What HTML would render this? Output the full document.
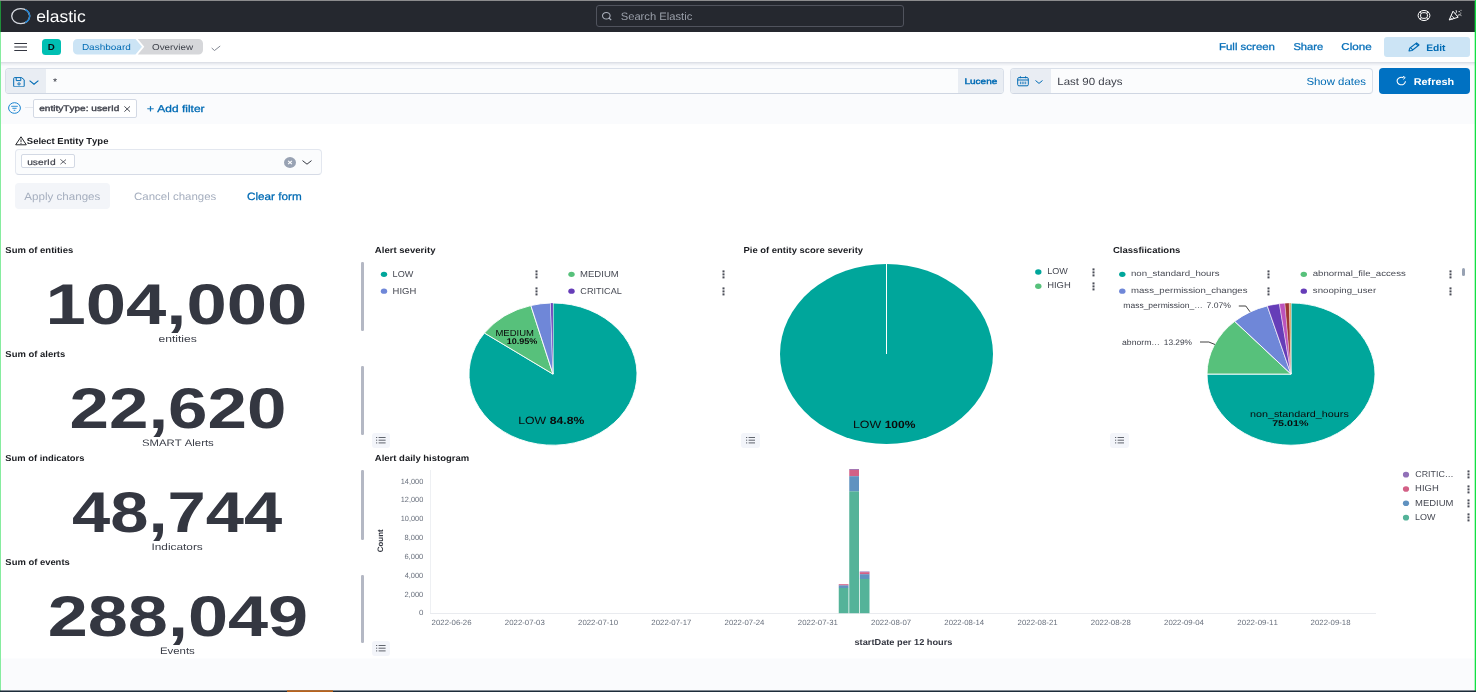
<!DOCTYPE html>
<html><head><meta charset="utf-8"><title>Dashboard - Elastic</title>
<style>
html,body{margin:0;padding:0;}
body{width:1476px;height:692px;overflow:hidden;background:#fafbfd;position:relative;font-family:"Liberation Sans",sans-serif;}
.t{position:absolute;white-space:nowrap;line-height:1;transform-origin:0 0;font-kerning:none;font-variant-ligatures:none;font-family:"Liberation Sans",sans-serif;}
</style></head><body><div id="root" style="position:absolute;left:0;top:0;width:1476px;height:692px;will-change:transform;">
<div style="position:absolute;left:0px;top:32px;width:1476px;height:30px;background:#ffffff;"></div>
<div style="position:absolute;left:0px;top:62px;width:1476px;height:1px;background:#dde0e7;"></div>
<div style="position:absolute;left:0px;top:63px;width:1476px;height:1px;background:#e8eaef;"></div>
<div style="position:absolute;left:0px;top:64px;width:1476px;height:1px;background:#f0f2f6;"></div>
<div style="position:absolute;left:0px;top:65px;width:1476px;height:1px;background:#f6f7fa;"></div>
<div style="position:absolute;left:0px;top:124px;width:1476px;height:534px;background:#ffffff;"></div>
<div style="position:absolute;left:0px;top:658px;width:1476px;height:1px;background:#fcfdfe;"></div>
<div style="position:absolute;left:0px;top:0px;width:1476px;height:32px;background:#25282f;"></div>
<div style="position:absolute;left:0px;top:0px;width:1476px;height:1px;background:#8c8c8e;"></div>
<svg style="position:absolute;left:10px;top:7px;" width="22" height="18" viewBox="0 0 22 18" preserveAspectRatio="none"><ellipse cx="10.7" cy="9.1" rx="9" ry="7.5" fill="none" stroke="#d6d9e0" stroke-width="1.3"/><path d="M15.2 2.6 A9 7.5 0 0 1 15.2 15.6" fill="none" stroke="#1b83d6" stroke-width="1.4"/></svg>
<div style="position:absolute;left:596px;top:5px;width:306px;height:20px;border:1px solid #50535d;border-radius:3px;"></div>
<svg style="position:absolute;left:601px;top:11px;" width="12" height="10" viewBox="0 0 12 10" preserveAspectRatio="none"><ellipse cx="5.3" cy="4.7" rx="3.8" ry="3.3" fill="none" stroke="#aab0bb" stroke-width="1.05"/><path d="M7.9 7.0 L10.2 9.0" stroke="#aab0bb" stroke-width="1.05" fill="none"/></svg>
<svg style="position:absolute;left:1416.6px;top:9.2px;" width="14" height="13" viewBox="0 0 14 13" preserveAspectRatio="none"><ellipse cx="7" cy="6.5" rx="5.9" ry="5.05" fill="none" stroke="#fff" stroke-width="1.0"/><rect x="3.6" y="3.7" width="6.8" height="5.6" rx="2.2" ry="2.0" fill="none" stroke="#fff" stroke-width="1.0"/><path d="M2.7 2.9 L4.3 4.3 M11.3 2.9 L9.7 4.3 M2.7 10.1 L4.3 8.7 M11.3 10.1 L9.7 8.7" stroke="#fff" stroke-width="0.9"/></svg>
<svg style="position:absolute;left:1447.5px;top:9.0px;" width="15" height="12" viewBox="0 0 15 12" preserveAspectRatio="none"><path d="M1.2 11 L5 2.2 L10.2 8.2 Z" fill="none" stroke="#fff" stroke-width="1" stroke-linejoin="round"/><path d="M3.2 6.5 L6.8 9.6 M2.2 8.8 L4.6 10.4" stroke="#fff" stroke-width="0.8"/><path d="M7.5 4.6 C8.6 3.4 8.8 2.4 8 1.2 M9.6 6.6 C11 5.4 12.4 5.6 13.4 6.6" fill="none" stroke="#fff" stroke-width="0.9"/><circle cx="11.2" cy="2.6" r="0.7" fill="#fff"/><circle cx="13" cy="1.2" r="0.5" fill="#fff"/><circle cx="12.8" cy="4" r="0.5" fill="#fff"/></svg>
<svg style="position:absolute;left:14px;top:42px;" width="14" height="10" viewBox="0 0 14 10" preserveAspectRatio="none"><path d="M0.3 1.5 H13 M0.3 4.95 H13 M0.3 8.4 H13" stroke="#343741" stroke-width="1.05"/></svg>
<div style="position:absolute;left:42px;top:39.2px;width:18.7px;height:15.6px;background:#00bfb3;border-radius:3.5px;"></div>
<svg style="position:absolute;left:73px;top:39.2px;" width="131" height="15.6" viewBox="0 0 131 15.6" preserveAspectRatio="none"><path d="M4.5 0 H62.5 L69 7.8 L62.5 15.6 H4.5 A4.5 4.5 0 0 1 0 11.1 V4.5 A4.5 4.5 0 0 1 4.5 0 Z" fill="#cce4f5"/><path d="M64.8 0 H125.5 A4.5 4.5 0 0 1 130 4.5 V11.1 A4.5 4.5 0 0 1 125.5 15.6 H64.8 L71.3 7.8 Z" fill="#d6d7da"/></svg>
<svg style="position:absolute;left:210.5px;top:44.5px;" width="10" height="6.5" viewBox="0 0 10 6.5" preserveAspectRatio="none"><path d="M0.7 3.0 L3.5 5.5 L9.2 1.0" fill="none" stroke="#7b818c" stroke-width="0.95"/></svg>
<div style="position:absolute;left:1384px;top:37px;width:85.7px;height:20.2px;background:#cce4f5;border-radius:3px;"></div>
<svg style="position:absolute;left:1407.5px;top:42px;" width="12" height="10" viewBox="0 0 12 10" preserveAspectRatio="none"><path d="M1 8.9 L1.7 6.3 L8.6 0.9 L11 3 L4 8.5 Z M2.6 5.9 L4.8 7.8 M7.6 1.7 L9.9 3.7" fill="none" stroke="#006bb4" stroke-width="1.1" stroke-linejoin="round"/></svg>
<div style="position:absolute;left:5px;top:68px;width:997px;height:25px;background:#fbfcfd;border:1px solid #d9dfe9;border-bottom-color:#cfd6e2;border-radius:4px;box-sizing:border-box;width:998.5px;height:26px;overflow:hidden;"><div style="position:absolute;left:0;top:0;width:40px;height:26px;background:#e9edf3;"></div><div style="position:absolute;left:952px;top:0;width:46px;height:26px;background:#e9edf3;"></div></div>
<svg style="position:absolute;left:12.6px;top:76.8px;" width="12" height="10.5" viewBox="0 0 12 10.5" preserveAspectRatio="none"><path d="M1.6 0.6 H8.6 L11.2 2.8 V9 A0.9 0.9 0 0 1 10.3 9.9 H1.6 A0.9 0.9 0 0 1 0.7 9 V1.5 A0.9 0.9 0 0 1 1.6 0.6 Z" fill="none" stroke="#006bb4" stroke-width="1"/><path d="M3.2 0.8 V3.6 H7.8 V0.8" fill="none" stroke="#006bb4" stroke-width="1"/><ellipse cx="6" cy="6.9" rx="1.2" ry="1.1" fill="none" stroke="#006bb4" stroke-width="0.9"/></svg>
<svg style="position:absolute;left:29px;top:79.6px;" width="10" height="5" viewBox="0 0 10 5" preserveAspectRatio="none"><path d="M0.6 0.6 L5 4.2 L9.4 0.6" fill="none" stroke="#006bb4" stroke-width="1.1"/></svg>
<div style="position:absolute;left:1010px;top:68px;width:362.5px;height:26px;background:#fbfcfd;border:1px solid #d9dfe9;border-bottom-color:#cfd6e2;border-radius:4px;box-sizing:border-box;overflow:hidden;"><div style="position:absolute;left:0;top:0;width:39.5px;height:26px;background:#e9edf3;"></div></div>
<svg style="position:absolute;left:1017px;top:76px;" width="12" height="10.5" viewBox="0 0 12 10.5" preserveAspectRatio="none"><rect x="0.7" y="1.6" width="10.6" height="8.2" rx="1.2" fill="none" stroke="#006bb4" stroke-width="1"/><path d="M0.7 4 H11.3 M3.4 0.3 V2.2 M8.6 0.3 V2.2" stroke="#006bb4" stroke-width="1" fill="none"/><path d="M3.4 5.6 V8.2 M5.2 5.6 V8.2 M6.9 5.6 V8.2 M8.7 5.6 V8.2" stroke="#006bb4" stroke-width="0.8"/></svg>
<svg style="position:absolute;left:1034.6px;top:79.8px;" width="8" height="4" viewBox="0 0 8 4" preserveAspectRatio="none"><path d="M0.5 0.5 L4 3.4 L7.5 0.5" fill="none" stroke="#006bb4" stroke-width="1"/></svg>
<div style="position:absolute;left:1379px;top:68px;width:90.7px;height:26.2px;background:#0071c2;border-radius:4px;"></div>
<svg style="position:absolute;left:1396px;top:76.2px;" width="11" height="10" viewBox="0 0 10 9.5" preserveAspectRatio="none"><path d="M8.6 5 A3.8 3.6 0 1 1 6.8 1.7" fill="none" stroke="#fff" stroke-width="1"/><path d="M6.2 0.2 L8.4 1.5 L6.6 3.2" fill="none" stroke="#fff" stroke-width="0.9"/></svg>
<svg style="position:absolute;left:8px;top:101.5px;" width="13" height="12" viewBox="0 0 13 12" preserveAspectRatio="none"><ellipse cx="6.5" cy="6" rx="5.9" ry="5.3" fill="none" stroke="#1a84d0" stroke-width="1"/><path d="M3.2 4.3 H9.8 M4.4 6.3 H8.6 M5.7 8.3 H7.3" stroke="#1a84d0" stroke-width="0.9"/></svg>
<div style="position:absolute;left:25px;top:106.8px;width:8px;height:0.9px;background:#e4e7ee;"></div>
<div style="position:absolute;left:33.2px;top:99.2px;width:103.6px;height:18.9px;background:#fff;border:1px solid #d3d9e4;border-radius:2px;box-sizing:border-box;"></div>
<svg style="position:absolute;left:123.6px;top:105.6px;" width="6.4" height="6" viewBox="0 0 6.4 6" preserveAspectRatio="none"><path d="M0.4 0.4 L6 5.6 M6 0.4 L0.4 5.6" stroke="#40434d" stroke-width="0.95"/></svg>
<svg style="position:absolute;left:14.6px;top:136.4px;" width="12" height="9.6" viewBox="0 0 12 9.6" preserveAspectRatio="none"><path d="M6 0.8 L11.3 8.8 H0.7 Z" fill="none" stroke="#1a1c21" stroke-width="0.95" stroke-linejoin="round"/><path d="M6 3.4 V6.2 M6 7.0 V7.9" stroke="#1a1c21" stroke-width="0.9"/></svg>
<div style="position:absolute;left:14.5px;top:149px;width:307.3px;height:26px;background:#fbfcfd;border:1px solid #e3e7ef;border-bottom-color:#d6dbe6;border-radius:4px;box-sizing:border-box;"></div>
<div style="position:absolute;left:21px;top:154.4px;width:53.5px;height:14px;background:#fff;border:1px solid #d3d9e4;border-radius:2px;box-sizing:border-box;"></div>
<svg style="position:absolute;left:59.7px;top:159.2px;" width="6.6" height="5.6" viewBox="0 0 6.6 5.6" preserveAspectRatio="none"><path d="M0.4 0.4 L6.2 5.2 M6.2 0.4 L0.4 5.2" stroke="#40434d" stroke-width="0.8"/></svg>
<svg style="position:absolute;left:284px;top:156.7px;" width="12" height="11" viewBox="0 0 12 11" preserveAspectRatio="none"><ellipse cx="6" cy="5.5" rx="6" ry="5.4" fill="#98a2b3"/><path d="M4.1 3.8 L7.9 7.2 M7.9 3.8 L4.1 7.2" stroke="#fff" stroke-width="1.1"/></svg>
<svg style="position:absolute;left:302px;top:159.8px;" width="10" height="5" viewBox="0 0 10 5" preserveAspectRatio="none"><path d="M0.5 0.6 L5 4.2 L9.5 0.6" fill="none" stroke="#343741" stroke-width="1"/></svg>
<div style="position:absolute;left:14.5px;top:183px;width:95px;height:25.7px;background:#f3f5f9;border-radius:4px;"></div>
<div style="position:absolute;left:361.3px;top:262px;width:2.4px;height:69.0px;background:#b4b8c4;border-radius:1.2px;"></div>
<div style="position:absolute;left:361.3px;top:366px;width:2.4px;height:69.2px;background:#b4b8c4;border-radius:1.2px;"></div>
<div style="position:absolute;left:361.3px;top:470.2px;width:2.4px;height:69.6px;background:#b4b8c4;border-radius:1.2px;"></div>
<div style="position:absolute;left:361.3px;top:574.5px;width:2.4px;height:68.7px;background:#b4b8c4;border-radius:1.2px;"></div>
<svg style="position:absolute;left:379px;top:270px;" width="10" height="9" viewBox="0 0 10 9" preserveAspectRatio="none"><ellipse cx="5.00" cy="4.35" rx="3.2" ry="2.7" fill="#00a69b"/></svg>
<svg style="position:absolute;left:535.0px;top:270.0px;" width="3" height="9" viewBox="0 0 3 9" preserveAspectRatio="none"><rect x="0.5" y="0.4" width="2.0" height="2.0" fill="#4a4d57"/><rect x="0.5" y="3.4" width="2.0" height="2.0" fill="#4a4d57"/><rect x="0.5" y="6.4" width="2.0" height="2.0" fill="#4a4d57"/></svg>
<svg style="position:absolute;left:379px;top:287px;" width="10" height="9" viewBox="0 0 10 9" preserveAspectRatio="none"><ellipse cx="5.00" cy="4.15" rx="3.2" ry="2.7" fill="#6f87d8"/></svg>
<svg style="position:absolute;left:535.0px;top:286.8px;" width="3" height="9" viewBox="0 0 3 9" preserveAspectRatio="none"><rect x="0.5" y="0.4" width="2.0" height="2.0" fill="#4a4d57"/><rect x="0.5" y="3.4" width="2.0" height="2.0" fill="#4a4d57"/><rect x="0.5" y="6.4" width="2.0" height="2.0" fill="#4a4d57"/></svg>
<svg style="position:absolute;left:567px;top:270px;" width="10" height="9" viewBox="0 0 10 9" preserveAspectRatio="none"><ellipse cx="4.50" cy="4.35" rx="3.2" ry="2.7" fill="#57c17b"/></svg>
<svg style="position:absolute;left:722.3px;top:270.0px;" width="3" height="9" viewBox="0 0 3 9" preserveAspectRatio="none"><rect x="0.5" y="0.4" width="2.0" height="2.0" fill="#4a4d57"/><rect x="0.5" y="3.4" width="2.0" height="2.0" fill="#4a4d57"/><rect x="0.5" y="6.4" width="2.0" height="2.0" fill="#4a4d57"/></svg>
<svg style="position:absolute;left:567px;top:287px;" width="10" height="9" viewBox="0 0 10 9" preserveAspectRatio="none"><ellipse cx="4.50" cy="4.15" rx="3.2" ry="2.7" fill="#663db8"/></svg>
<svg style="position:absolute;left:722.3px;top:286.8px;" width="3" height="9" viewBox="0 0 3 9" preserveAspectRatio="none"><rect x="0.5" y="0.4" width="2.0" height="2.0" fill="#4a4d57"/><rect x="0.5" y="3.4" width="2.0" height="2.0" fill="#4a4d57"/><rect x="0.5" y="6.4" width="2.0" height="2.0" fill="#4a4d57"/></svg>
<svg style="position:absolute;left:467.0px;top:300.65px;" width="172" height="146.2" viewBox="0 0 172 146.2" preserveAspectRatio="none"><path d="M86 73.1 L86.00 2.00 A84 71.1 0 1 1 17.43 32.03 Z" fill="#00a69b" stroke="#fff" stroke-width="0.9" stroke-linejoin="round"/><path d="M86 73.1 L17.43 32.03 A84 71.1 0 0 1 63.83 4.52 Z" fill="#57c17b" stroke="#fff" stroke-width="0.9" stroke-linejoin="round"/><path d="M86 73.1 L63.83 4.52 A84 71.1 0 0 1 83.63 2.03 Z" fill="#6f87d8" stroke="#fff" stroke-width="0.9" stroke-linejoin="round"/><path d="M86 73.1 L83.63 2.03 A84 71.1 0 0 1 86.00 2.00 Z" fill="#663db8" stroke="#fff" stroke-width="0.25" stroke-linejoin="round"/></svg>
<div style="position:absolute;left:371.5px;top:432.8px;width:18.5px;height:15px;background:#f3f5fa;border-radius:3px;"></div>
<svg style="position:absolute;left:376.0px;top:437.2px;" width="9.6" height="6.4" viewBox="0 0 9.6 6.4" preserveAspectRatio="none"><path d="M0 0.5 H1.2 M0 3.2 H1.2 M0 5.9 H1.2" stroke="#454953" stroke-width="0.85"/><path d="M2.6 0.5 H9.6 M2.6 3.2 H9.6 M2.6 5.9 H9.6" stroke="#454953" stroke-width="0.85"/></svg>
<svg style="position:absolute;left:778.0px;top:262.25px;" width="217.0" height="184" viewBox="0 0 217.0 184" preserveAspectRatio="none"><ellipse cx="108.5" cy="92" rx="106.5" ry="90" fill="#00a69b"/><path d="M108.5 92 L108.5 2" stroke="#fff" stroke-width="1.0"/></svg>
<svg style="position:absolute;left:1034px;top:268px;" width="10" height="9" viewBox="0 0 10 9" preserveAspectRatio="none"><ellipse cx="4.30" cy="3.95" rx="3.2" ry="2.7" fill="#00a69b"/></svg>
<svg style="position:absolute;left:1091.5px;top:267.6px;" width="3" height="9" viewBox="0 0 3 9" preserveAspectRatio="none"><rect x="0.5" y="0.4" width="2.0" height="2.0" fill="#4a4d57"/><rect x="0.5" y="3.4" width="2.0" height="2.0" fill="#4a4d57"/><rect x="0.5" y="6.4" width="2.0" height="2.0" fill="#4a4d57"/></svg>
<svg style="position:absolute;left:1034px;top:282px;" width="10" height="9" viewBox="0 0 10 9" preserveAspectRatio="none"><ellipse cx="4.30" cy="4.25" rx="3.2" ry="2.7" fill="#57c17b"/></svg>
<svg style="position:absolute;left:1091.5px;top:281.9px;" width="3" height="9" viewBox="0 0 3 9" preserveAspectRatio="none"><rect x="0.5" y="0.4" width="2.0" height="2.0" fill="#4a4d57"/><rect x="0.5" y="3.4" width="2.0" height="2.0" fill="#4a4d57"/><rect x="0.5" y="6.4" width="2.0" height="2.0" fill="#4a4d57"/></svg>
<div style="position:absolute;left:741px;top:432.8px;width:18.5px;height:15px;background:#f3f5fa;border-radius:3px;"></div>
<svg style="position:absolute;left:745.5px;top:437.2px;" width="9.6" height="6.4" viewBox="0 0 9.6 6.4" preserveAspectRatio="none"><path d="M0 0.5 H1.2 M0 3.2 H1.2 M0 5.9 H1.2" stroke="#454953" stroke-width="0.85"/><path d="M2.6 0.5 H9.6 M2.6 3.2 H9.6 M2.6 5.9 H9.6" stroke="#454953" stroke-width="0.85"/></svg>
<svg style="position:absolute;left:1118px;top:270px;" width="10" height="9" viewBox="0 0 10 9" preserveAspectRatio="none"><ellipse cx="4.30" cy="4.35" rx="3.2" ry="2.7" fill="#00a69b"/></svg>
<svg style="position:absolute;left:1267.0px;top:270.0px;" width="3" height="9" viewBox="0 0 3 9" preserveAspectRatio="none"><rect x="0.5" y="0.4" width="2.0" height="2.0" fill="#4a4d57"/><rect x="0.5" y="3.4" width="2.0" height="2.0" fill="#4a4d57"/><rect x="0.5" y="6.4" width="2.0" height="2.0" fill="#4a4d57"/></svg>
<svg style="position:absolute;left:1118px;top:287px;" width="10" height="9" viewBox="0 0 10 9" preserveAspectRatio="none"><ellipse cx="4.30" cy="4.15" rx="3.2" ry="2.7" fill="#6f87d8"/></svg>
<svg style="position:absolute;left:1267.0px;top:286.8px;" width="3" height="9" viewBox="0 0 3 9" preserveAspectRatio="none"><rect x="0.5" y="0.4" width="2.0" height="2.0" fill="#4a4d57"/><rect x="0.5" y="3.4" width="2.0" height="2.0" fill="#4a4d57"/><rect x="0.5" y="6.4" width="2.0" height="2.0" fill="#4a4d57"/></svg>
<svg style="position:absolute;left:1299px;top:270px;" width="10" height="9" viewBox="0 0 10 9" preserveAspectRatio="none"><ellipse cx="4.80" cy="4.35" rx="3.2" ry="2.7" fill="#57c17b"/></svg>
<svg style="position:absolute;left:1448.5px;top:270.0px;" width="3" height="9" viewBox="0 0 3 9" preserveAspectRatio="none"><rect x="0.5" y="0.4" width="2.0" height="2.0" fill="#4a4d57"/><rect x="0.5" y="3.4" width="2.0" height="2.0" fill="#4a4d57"/><rect x="0.5" y="6.4" width="2.0" height="2.0" fill="#4a4d57"/></svg>
<svg style="position:absolute;left:1299px;top:287px;" width="10" height="9" viewBox="0 0 10 9" preserveAspectRatio="none"><ellipse cx="4.80" cy="4.15" rx="3.2" ry="2.7" fill="#663db8"/></svg>
<svg style="position:absolute;left:1448.5px;top:286.8px;" width="3" height="9" viewBox="0 0 3 9" preserveAspectRatio="none"><rect x="0.5" y="0.4" width="2.0" height="2.0" fill="#4a4d57"/><rect x="0.5" y="3.4" width="2.0" height="2.0" fill="#4a4d57"/><rect x="0.5" y="6.4" width="2.0" height="2.0" fill="#4a4d57"/></svg>
<div style="position:absolute;left:1462.2px;top:267.5px;width:3px;height:8.8px;background:#98a2b3;border-radius:1.5px;"></div>
<svg style="position:absolute;left:1205.4px;top:300.65px;" width="172" height="146.2" viewBox="0 0 172 146.2" preserveAspectRatio="none"><path d="M86 73.1 L86.00 2.00 A84 71.1 0 1 1 2.00 73.06 Z" fill="#00a69b" stroke="#fff" stroke-width="0.9" stroke-linejoin="round"/><path d="M86 73.1 L2.00 73.06 A84 71.1 0 0 1 29.66 20.36 Z" fill="#57c17b" stroke="#fff" stroke-width="0.9" stroke-linejoin="round"/><path d="M86 73.1 L29.66 20.36 A84 71.1 0 0 1 62.31 4.89 Z" fill="#6f87d8" stroke="#fff" stroke-width="0.9" stroke-linejoin="round"/><path d="M86 73.1 L62.31 4.89 A84 71.1 0 0 1 74.43 2.68 Z" fill="#663db8" stroke="#fff" stroke-width="0.6" stroke-linejoin="round"/><path d="M86 73.1 L74.43 2.68 A84 71.1 0 0 1 79.94 2.19 Z" fill="#bc52bc" stroke="#fff" stroke-width="0.35" stroke-linejoin="round"/><path d="M86 73.1 L79.94 2.19 A84 71.1 0 0 1 84.31 2.01 Z" fill="#9e3533" stroke="#fff" stroke-width="0.3" stroke-linejoin="round"/><path d="M86 73.1 L84.31 2.01 A84 71.1 0 0 1 86.00 2.00 Z" fill="#daa05d" stroke="#fff" stroke-width="0.25" stroke-linejoin="round"/></svg>
<svg style="position:absolute;left:1236px;top:303px;" width="18" height="12" viewBox="0 0 18 12" preserveAspectRatio="none"><path d="M2.8 3 H9.8 L14 8.8" fill="none" stroke="#111" stroke-width="0.8"/></svg>
<svg style="position:absolute;left:1198px;top:339px;" width="20" height="9" viewBox="0 0 20 9" preserveAspectRatio="none"><path d="M2 3 H10.8 L17 5.5" fill="none" stroke="#111" stroke-width="0.8"/></svg>
<div style="position:absolute;left:1110px;top:432.8px;width:18.5px;height:15px;background:#f3f5fa;border-radius:3px;"></div>
<svg style="position:absolute;left:1114.5px;top:437.2px;" width="9.6" height="6.4" viewBox="0 0 9.6 6.4" preserveAspectRatio="none"><path d="M0 0.5 H1.2 M0 3.2 H1.2 M0 5.9 H1.2" stroke="#454953" stroke-width="0.85"/><path d="M2.6 0.5 H9.6 M2.6 3.2 H9.6 M2.6 5.9 H9.6" stroke="#454953" stroke-width="0.85"/></svg>
<div style="position:absolute;left:430.3px;top:469.8px;width:0.8px;height:143.6px;background:#eef0f3;"></div>
<div style="position:absolute;left:430.3px;top:612.9px;width:946.0px;height:0.8px;background:#e9ebef;"></div>
<svg style="position:absolute;left:830px;top:460px;" width="50" height="160" viewBox="0 0 50 160" preserveAspectRatio="none"><rect x="8.75" y="124.20" width="9.75" height="1.30" fill="#d36086"/><rect x="8.75" y="125.40" width="9.75" height="2.60" fill="#6092c0"/><rect x="8.75" y="127.90" width="9.75" height="25.30" fill="#54b399"/><rect x="19.25" y="9.00" width="9.75" height="0.90" fill="#9170b8"/><rect x="19.25" y="9.80" width="9.75" height="6.50" fill="#d36086"/><rect x="19.25" y="16.20" width="9.75" height="15.30" fill="#6092c0"/><rect x="19.25" y="31.40" width="9.75" height="121.80" fill="#54b399"/><rect x="29.75" y="111.50" width="9.75" height="0.80" fill="#9170b8"/><rect x="29.75" y="112.20" width="9.75" height="2.10" fill="#d36086"/><rect x="29.75" y="114.20" width="9.75" height="4.80" fill="#6092c0"/><rect x="29.75" y="118.90" width="9.75" height="34.30" fill="#54b399"/></svg>
<svg style="position:absolute;left:1401px;top:470px;" width="10" height="9" viewBox="0 0 10 9" preserveAspectRatio="none"><ellipse cx="5.00" cy="4.65" rx="3.1" ry="2.8" fill="#9170b8"/></svg>
<svg style="position:absolute;left:1467.2px;top:470.3px;" width="3" height="9" viewBox="0 0 3 9" preserveAspectRatio="none"><rect x="0.5" y="0.4" width="2.0" height="2.0" fill="#4a4d57"/><rect x="0.5" y="3.4" width="2.0" height="2.0" fill="#4a4d57"/><rect x="0.5" y="6.4" width="2.0" height="2.0" fill="#4a4d57"/></svg>
<svg style="position:absolute;left:1401px;top:485px;" width="10" height="9" viewBox="0 0 10 9" preserveAspectRatio="none"><ellipse cx="5.00" cy="3.98" rx="3.1" ry="2.8" fill="#d36086"/></svg>
<svg style="position:absolute;left:1467.2px;top:484.63px;" width="3" height="9" viewBox="0 0 3 9" preserveAspectRatio="none"><rect x="0.5" y="0.4" width="2.0" height="2.0" fill="#4a4d57"/><rect x="0.5" y="3.4" width="2.0" height="2.0" fill="#4a4d57"/><rect x="0.5" y="6.4" width="2.0" height="2.0" fill="#4a4d57"/></svg>
<svg style="position:absolute;left:1401px;top:499px;" width="10" height="9" viewBox="0 0 10 9" preserveAspectRatio="none"><ellipse cx="5.00" cy="4.31" rx="3.1" ry="2.8" fill="#6092c0"/></svg>
<svg style="position:absolute;left:1467.2px;top:498.96px;" width="3" height="9" viewBox="0 0 3 9" preserveAspectRatio="none"><rect x="0.5" y="0.4" width="2.0" height="2.0" fill="#4a4d57"/><rect x="0.5" y="3.4" width="2.0" height="2.0" fill="#4a4d57"/><rect x="0.5" y="6.4" width="2.0" height="2.0" fill="#4a4d57"/></svg>
<svg style="position:absolute;left:1401px;top:513px;" width="10" height="9" viewBox="0 0 10 9" preserveAspectRatio="none"><ellipse cx="5.00" cy="4.64" rx="3.1" ry="2.8" fill="#54b399"/></svg>
<svg style="position:absolute;left:1467.2px;top:513.29px;" width="3" height="9" viewBox="0 0 3 9" preserveAspectRatio="none"><rect x="0.5" y="0.4" width="2.0" height="2.0" fill="#4a4d57"/><rect x="0.5" y="3.4" width="2.0" height="2.0" fill="#4a4d57"/><rect x="0.5" y="6.4" width="2.0" height="2.0" fill="#4a4d57"/></svg>
<div style="position:absolute;left:371.5px;top:640.8px;width:18.5px;height:15px;background:#f3f5fa;border-radius:3px;"></div>
<svg style="position:absolute;left:376.0px;top:645.1999999999999px;" width="9.6" height="6.4" viewBox="0 0 9.6 6.4" preserveAspectRatio="none"><path d="M0 0.5 H1.2 M0 3.2 H1.2 M0 5.9 H1.2" stroke="#454953" stroke-width="0.85"/><path d="M2.6 0.5 H9.6 M2.6 3.2 H9.6 M2.6 5.9 H9.6" stroke="#454953" stroke-width="0.85"/></svg>
<div style="position:absolute;left:0px;top:1px;width:1.1px;height:31px;background:#1f8f3a;"></div>
<div style="position:absolute;left:0px;top:32px;width:1.1px;height:660px;background:#86ec9f;"></div>
<div style="position:absolute;left:1474px;top:1px;width:1px;height:691px;background:rgba(18,224,67,0.3);"></div>
<div style="position:absolute;left:1475px;top:0px;width:1px;height:692px;background:#12e043;"></div>
<div style="position:absolute;left:0px;top:690px;width:1476px;height:1px;background:rgba(29,44,58,0.55);"></div>
<div style="position:absolute;left:0px;top:691px;width:1476px;height:1px;background:#1d2c3a;"></div>
<div style="position:absolute;left:287px;top:690px;width:46px;height:1px;background:rgba(184,99,28,0.75);"></div>
<div style="position:absolute;left:287px;top:691px;width:46px;height:1px;background:#b8631c;"></div>
<svg id="txt" width="1476" height="692" style="position:absolute;left:0;top:0;font-family:'Liberation Sans',sans-serif;font-kerning:none;font-variant-ligatures:none;" text-rendering="geometricPrecision">
<text transform="translate(36.16,22) scale(1.0577,1)" font-size="16.5" fill="#ffffff">elastic</text>
<text transform="translate(620.70,20) scale(1.0369,1)" font-size="10.8" fill="#9a9fa9">Search Elastic</text>
<text transform="translate(47.67,50) scale(1.1042,1)" font-size="8.8" font-weight="bold" fill="#0b0f14">D</text>
<text transform="translate(81.90,50) scale(1.1634,1)" font-size="8.6" fill="#006bb4">Dashboard</text>
<text transform="translate(151.95,50) scale(1.1501,1)" font-size="8.6" fill="#3f424b">Overview</text>
<text transform="translate(1218.98,50) scale(1.1596,1)" font-size="9.9" fill="#0a71ba" stroke="#0a71ba" stroke-width="0.3">Full screen</text>
<text transform="translate(1293.40,50) scale(1.1276,1)" font-size="9.9" fill="#0a71ba" stroke="#0a71ba" stroke-width="0.3">Share</text>
<text transform="translate(1341.32,50) scale(1.1744,1)" font-size="9.9" fill="#0a71ba" stroke="#0a71ba" stroke-width="0.3">Clone</text>
<text transform="translate(1426.13,51) scale(1.0917,1)" font-size="9.4" font-weight="bold" fill="#006bb4">Edit</text>
<text transform="translate(53.04,85) scale(1.0556,1)" font-size="10" fill="#343741">*</text>
<text transform="translate(964.50,84) scale(1.2470,1)" font-size="8.0" fill="#006bb4" stroke="#006bb4" stroke-width="0.4">Lucene</text>
<text transform="translate(1057.28,85) scale(1.1078,1)" font-size="10.4" fill="#3d404a">Last 90 days</text>
<text transform="translate(1306.39,85) scale(1.0989,1)" font-size="10.4" fill="#006bb4">Show dates</text>
<text transform="translate(1413.70,85) scale(1.1062,1)" font-size="9.8" font-weight="bold" fill="#ffffff">Refresh</text>
<text transform="translate(39.17,111) scale(1.2616,1)" font-size="8.0" fill="#40434d" stroke="#40434d" stroke-width="0.35">entityType: userId</text>
<text transform="translate(147.03,112) scale(1.2206,1)" font-size="9.8" fill="#006bb4" stroke="#006bb4" stroke-width="0.3">+ Add filter</text>
<text transform="translate(26.84,144) scale(1.0764,1)" font-size="8.8" font-weight="bold" fill="#1a1c21">Select Entity Type</text>
<text transform="translate(27.16,165) scale(1.2208,1)" font-size="8.4" fill="#40434d" stroke="#40434d" stroke-width="0.2">userId</text>
<text transform="translate(24.30,200) scale(1.0945,1)" font-size="10.6" fill="#a6afbf">Apply changes</text>
<text transform="translate(134.03,200) scale(1.0835,1)" font-size="10.6" fill="#a6afbf">Cancel changes</text>
<text transform="translate(247.01,200) scale(1.1066,1)" font-size="10.6" fill="#006bb4" stroke="#006bb4" stroke-width="0.25">Clear form</text>
<text transform="translate(5.34,253) scale(1.0908,1)" font-size="8.7" font-weight="bold" fill="#1a1c21">Sum of entities</text>
<text transform="translate(45.47,324) scale(1.2623,1)" font-size="57.4" font-weight="bold" fill="#343741">104,000</text>
<text transform="translate(158.48,342) scale(1.2911,1)" font-size="9.4" fill="#3d404a">entities</text>
<text transform="translate(5.34,357) scale(1.0889,1)" font-size="8.7" font-weight="bold" fill="#1a1c21">Sum of alerts</text>
<text transform="translate(69.49,428) scale(1.2363,1)" font-size="57.4" font-weight="bold" fill="#343741">22,620</text>
<text transform="translate(141.99,446) scale(1.2084,1)" font-size="9.4" fill="#3d404a">SMART Alerts</text>
<text transform="translate(5.34,461) scale(1.0781,1)" font-size="8.7" font-weight="bold" fill="#1a1c21">Sum of indicators</text>
<text transform="translate(71.97,532) scale(1.1977,1)" font-size="57.4" font-weight="bold" fill="#343741">48,744</text>
<text transform="translate(151.43,550) scale(1.2635,1)" font-size="9.4" fill="#3d404a">Indicators</text>
<text transform="translate(5.34,565) scale(1.0849,1)" font-size="8.7" font-weight="bold" fill="#1a1c21">Sum of events</text>
<text transform="translate(47.66,636) scale(1.2556,1)" font-size="57.4" font-weight="bold" fill="#343741">288,049</text>
<text transform="translate(159.88,654) scale(1.2184,1)" font-size="9.4" fill="#3d404a">Events</text>
<text transform="translate(374.86,253) scale(1.1007,1)" font-size="8.7" font-weight="bold" fill="#1a1c21">Alert severity</text>
<text transform="translate(392.57,277) scale(1.0583,1)" font-size="8.6" fill="#464953">LOW</text>
<text transform="translate(392.54,294) scale(1.1032,1)" font-size="8.6" fill="#464953">HIGH</text>
<text transform="translate(580.04,277) scale(1.1105,1)" font-size="8.6" fill="#464953">MEDIUM</text>
<text transform="translate(580.35,294) scale(1.0576,1)" font-size="8.6" fill="#464953">CRITICAL</text>
<text transform="translate(495.44,336) scale(1.0795,1)" font-size="8.8" fill="#0b0b0b">MEDIUM</text>
<text transform="translate(506.63,344) scale(1.1070,1)" font-size="8.2" font-weight="bold" fill="#0b0b0b">10.95%</text>
<text transform="translate(518.22,424) scale(1.1591,1)" font-size="10.6" fill="#0b0b0b">LOW</text>
<text transform="translate(549.84,424) scale(1.1680,1)" font-size="10.4" font-weight="bold" fill="#0b0b0b">84.8%</text>
<text transform="translate(743.49,253) scale(1.0860,1)" font-size="8.7" font-weight="bold" fill="#1a1c21">Pie of entity score severity</text>
<text transform="translate(1047.18,274) scale(1.0530,1)" font-size="8.6" fill="#464953">LOW</text>
<text transform="translate(1047.14,288) scale(1.0982,1)" font-size="8.6" fill="#464953">HIGH</text>
<text transform="translate(852.91,428) scale(1.1720,1)" font-size="10.6" fill="#0b0b0b">LOW</text>
<text transform="translate(884.65,428) scale(1.1562,1)" font-size="10.4" font-weight="bold" fill="#0b0b0b">100%</text>
<text transform="translate(1112.92,253) scale(1.0984,1)" font-size="8.7" font-weight="bold" fill="#1a1c21">Classfiications</text>
<text transform="translate(1130.97,276) scale(1.2066,1)" font-size="8.0" fill="#464953">non_standard_hours</text>
<text transform="translate(1130.97,293) scale(1.2024,1)" font-size="8.0" fill="#464953">mass_permission_changes</text>
<text transform="translate(1312.69,276) scale(1.2038,1)" font-size="8.0" fill="#464953">abnormal_file_access</text>
<text transform="translate(1312.83,293) scale(1.2064,1)" font-size="8.0" fill="#464953">snooping_user</text>
<text transform="translate(1123.35,308) scale(1.0616,1)" font-size="8.0" fill="#3a3d47">mass_permission_…</text>
<text transform="translate(1206.57,308) scale(1.0763,1)" font-size="8.0" fill="#3a3d47">7.07%</text>
<text transform="translate(1122.03,345) scale(1.0801,1)" font-size="8.0" fill="#3a3d47">abnorm…</text>
<text transform="translate(1163.78,345) scale(1.0396,1)" font-size="8.0" fill="#3a3d47">13.29%</text>
<text transform="translate(1249.90,417) scale(1.2259,1)" font-size="8.8" fill="#0b0b0b">non_standard_hours</text>
<text transform="translate(1272.14,426) scale(1.2900,1)" font-size="8.3" font-weight="bold" fill="#0b0b0b">75.01%</text>
<text transform="translate(374.86,461) scale(1.0911,1)" font-size="8.7" font-weight="bold" fill="#1a1c21">Alert daily histogram</text>
<text transform="translate(400.75,484) scale(0.9695,1)" font-size="7.6" fill="#69707d">14,000</text>
<text transform="translate(400.75,502) scale(0.9695,1)" font-size="7.6" fill="#69707d">12,000</text>
<text transform="translate(400.75,521) scale(0.9695,1)" font-size="7.6" fill="#69707d">10,000</text>
<text transform="translate(404.48,540) scale(0.9885,1)" font-size="7.6" fill="#69707d">8,000</text>
<text transform="translate(404.42,559) scale(0.9916,1)" font-size="7.6" fill="#69707d">6,000</text>
<text transform="translate(404.63,578) scale(0.9804,1)" font-size="7.6" fill="#69707d">4,000</text>
<text transform="translate(404.42,597) scale(0.9916,1)" font-size="7.6" fill="#69707d">2,000</text>
<text transform="translate(418.90,615) scale(1.0417,1)" font-size="7.6" fill="#69707d">0</text>
<text transform="translate(383.4,552.2) rotate(-90)" font-size="7.9" font-weight="bold" fill="#343741">Count</text>
<text transform="translate(431.61,625) scale(1.0283,1)" font-size="7.6" fill="#69707d">2022-06-26</text>
<text transform="translate(504.86,625) scale(1.0283,1)" font-size="7.6" fill="#69707d">2022-07-03</text>
<text transform="translate(578.11,625) scale(1.0272,1)" font-size="7.6" fill="#69707d">2022-07-10</text>
<text transform="translate(651.36,625) scale(1.0293,1)" font-size="7.6" fill="#69707d">2022-07-17</text>
<text transform="translate(724.61,625) scale(1.0252,1)" font-size="7.6" fill="#69707d">2022-07-24</text>
<text transform="translate(797.86,625) scale(1.0293,1)" font-size="7.6" fill="#69707d">2022-07-31</text>
<text transform="translate(871.11,625) scale(1.0293,1)" font-size="7.6" fill="#69707d">2022-08-07</text>
<text transform="translate(944.36,625) scale(1.0252,1)" font-size="7.6" fill="#69707d">2022-08-14</text>
<text transform="translate(1017.61,625) scale(1.0293,1)" font-size="7.6" fill="#69707d">2022-08-21</text>
<text transform="translate(1090.86,625) scale(1.0278,1)" font-size="7.6" fill="#69707d">2022-08-28</text>
<text transform="translate(1164.11,625) scale(1.0252,1)" font-size="7.6" fill="#69707d">2022-09-04</text>
<text transform="translate(1237.35,625) scale(1.0449,1)" font-size="7.6" fill="#69707d">2022-09-11</text>
<text transform="translate(1310.61,625) scale(1.0278,1)" font-size="7.6" fill="#69707d">2022-09-18</text>
<text transform="translate(854.48,645) scale(1.0743,1)" font-size="8.6" font-weight="bold" fill="#343741">startDate per 12 hours</text>
<text transform="translate(1415.36,477) scale(1.0171,1)" font-size="8.7" fill="#464953">CRITIC…</text>
<text transform="translate(1415.04,491) scale(1.0905,1)" font-size="8.7" fill="#464953">HIGH</text>
<text transform="translate(1415.04,506) scale(1.0889,1)" font-size="8.7" fill="#464953">MEDIUM</text>
<text transform="translate(1415.08,520) scale(1.0304,1)" font-size="8.7" fill="#464953">LOW</text>
</svg>
</div></body></html>
